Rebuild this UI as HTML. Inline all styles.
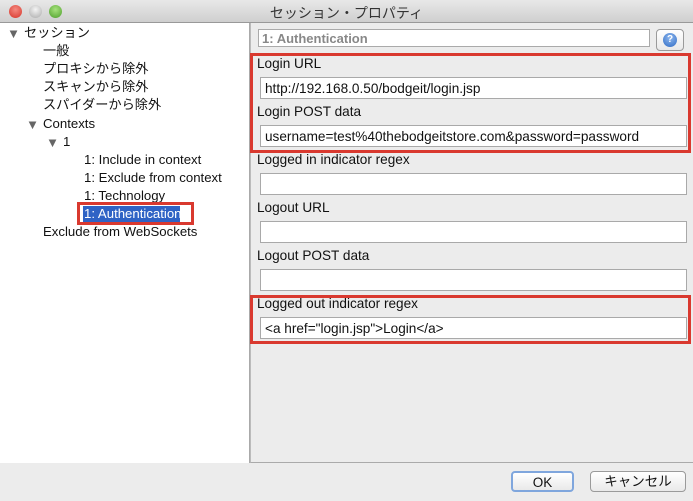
<!DOCTYPE html>
<html><head><meta charset="utf-8"><style>
*{margin:0;padding:0;box-sizing:border-box}
body{width:693px;height:501px;overflow:hidden;background:#ececec;font-family:"Liberation Sans","Noto Sans CJK JP",sans-serif;font-size:12px;color:#111;position:relative}
.a{position:absolute;white-space:nowrap}
#title{left:0;top:0;width:693px;height:23px;background:linear-gradient(#e8e8e8,#cfcfcf);border-bottom:1px solid #999}
.dot{width:13px;height:13px;border-radius:50%;top:5px}
#left{left:0;top:23px;width:250px;height:440px;background:#fff;border-right:1px solid #aaa}
#right{left:250px;top:23px;width:443px;height:440px;background:#ececec;border-left:1px solid #bbb;border-bottom:1px solid #aaa}
.t{font-size:13.2px;line-height:16px}
.f{background:#fff;border:1px solid #a9a9a9;height:22px;left:260px;width:427px;padding:3px 0 0 4px;font-size:13.6px}
.l{left:257px;font-size:13.6px}
.red{border:3px solid #d9392f}
.btn{height:21px;border:1px solid #9a9a9a;border-radius:4px;background:linear-gradient(#fff,#e9e9e9);text-align:center;line-height:19px;font-size:13.5px}
</style></head><body>
<div class="a" id="title"></div>
<div class="a dot" style="left:9px;background:radial-gradient(circle at 50% 35%,#f58a80,#d6342a)"></div>
<div class="a dot" style="left:29px;background:radial-gradient(circle at 50% 35%,#f4f4f4,#aaa)"></div>
<div class="a dot" style="left:49px;background:radial-gradient(circle at 50% 35%,#a7e27d,#4c9e2a)"></div>
<div class="a" style="left:0;width:693px;top:3px;text-align:center;font-size:14px;color:#333">セッション・プロパティ</div>
<div class="a" id="left"></div>
<div class="a" id="right"></div>
<div class="a t" style="left:7px;top:26px;color:#666">▼</div>
<div class="a t" style="left:24px;top:25px">セッション</div>
<div class="a t" style="left:43px;top:43px">一般</div>
<div class="a t" style="left:43px;top:61px">プロキシから除外</div>
<div class="a t" style="left:43px;top:79px">スキャンから除外</div>
<div class="a t" style="left:43px;top:97px">スパイダーから除外</div>
<div class="a t" style="left:26px;top:117px;color:#666">▼</div>
<div class="a t" style="left:43px;top:116px">Contexts</div>
<div class="a t" style="left:46px;top:135px;color:#666">▼</div>
<div class="a t" style="left:63px;top:134px">1</div>
<div class="a t" style="left:84px;top:152px">1: Include in context</div>
<div class="a t" style="left:84px;top:170px">1: Exclude from context</div>
<div class="a t" style="left:84px;top:188px">1: Technology</div>
<div class="a red" style="left:77px;top:202px;width:117px;height:23px"></div>
<div class="a t" style="left:83px;top:206px;width:97px;height:16px;background:#2f63c5;color:#fff;padding-left:1px">1: Authentication</div>
<div class="a t" style="left:43px;top:224px">Exclude from WebSockets</div>

<div class="a" style="left:258px;top:29px;width:392px;height:18px;border:1px solid #aaa;background:#fff;color:#888;font-weight:bold;padding:1px 3px;font-size:13px">1: Authentication</div>
<div class="a btn" style="left:656px;top:29px;width:28px;height:22px"><div style="width:14px;height:14px;border-radius:50%;background:radial-gradient(circle at 50% 35%,#8fb8ef,#2f6bc4);margin:3px auto;color:#fff;font-size:10px;line-height:14px;font-weight:bold">?</div></div>

<div class="a red" style="left:250px;top:53px;width:441px;height:100px"></div>
<div class="a l" style="top:56px">Login URL</div>
<div class="a f" style="top:77px">http://192.168.0.50/bodgeit/login.jsp</div>
<div class="a l" style="top:104px">Login POST data</div>
<div class="a f" style="top:125px">username=test%40thebodgeitstore.com&amp;password=password</div>
<div class="a l" style="top:152px">Logged in indicator regex</div>
<div class="a f" style="top:173px"></div>
<div class="a l" style="top:200px">Logout URL</div>
<div class="a f" style="top:221px"></div>
<div class="a l" style="top:248px">Logout POST data</div>
<div class="a f" style="top:269px"></div>
<div class="a red" style="left:250px;top:295px;width:441px;height:49px"></div>
<div class="a l" style="top:296px">Logged out indicator regex</div>
<div class="a f" style="top:317px">&lt;a href="login.jsp"&gt;Login&lt;/a&gt;</div>

<div class="a btn" style="left:511px;top:471px;width:63px;border:2px solid #7fa6dd">OK</div>
<div class="a btn" style="left:590px;top:471px;width:96px">キャンセル</div>
</body></html>
